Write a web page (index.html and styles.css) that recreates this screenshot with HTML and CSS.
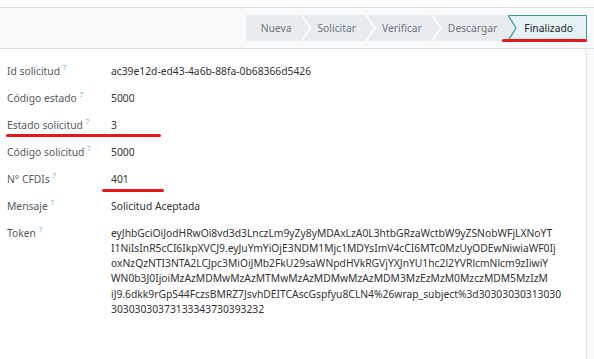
FILE: index.html
```html
<!DOCTYPE html>
<html lang="es">
  <head>
    <meta charset="UTF-8" />
    <meta name="viewport" content="width=device-width, initial-scale=1.0" />
    <title>Solicitud de descarga</title>
    <link rel="stylesheet" href="styles.css">
  </head>
  <body>
    <div class="top-gap"></div>
    <div class="control-panel">
      <div class="statusbar">
        <div class="status-btn first">Nueva</div>
        <div class="status-btn">Solicitar</div>
        <div class="status-btn">Verificar</div>
        <div class="status-btn">Descargar</div>
        <div class="status-btn current">
          <svg class="notch" width="10" height="26" viewBox="0 0 10 26">
            <polygon points="0,0 8,13 0,26" fill="#e9ecef" />
            <polyline points="0,0 8,13 0,26" fill="none" stroke="#3b9aa0" stroke-width="1.2" />
          </svg>
          Finalizado
          <span class="mark mark-status"></span>
        </div>
      </div>
    </div>

    <div class="content">
      <div class="sheet">
        <div class="form">
          <div class="field-row">
            <div class="label">Id solicitud<sup>?</sup></div>
            <div class="value">ac39e12d-ed43-4a6b-88fa-0b68366d5426</div>
          </div>
          <div class="field-row">
            <div class="label">Código estado<sup>?</sup></div>
            <div class="value">5000</div>
          </div>
          <div class="field-row">
            <div class="label">Estado solicitud<sup>?</sup></div>
            <div class="value">3</div>
            <span class="mark mark-estado"></span>
          </div>
          <div class="field-row">
            <div class="label">Código solicitud<sup>?</sup></div>
            <div class="value">5000</div>
          </div>
          <div class="field-row">
            <div class="label">N° CFDIs<sup>?</sup></div>
            <div class="value">401</div>
            <span class="mark mark-cfdis"></span>
          </div>
          <div class="field-row">
            <div class="label">Mensaje<sup>?</sup></div>
            <div class="value">Solicitud Aceptada</div>
          </div>
          <div class="field-row">
            <div class="label">Token<sup>?</sup></div>
            <div class="value token">eyJhbGciOiJodHRwOi8vd3d3LnczLm9yZy8yMDAxLzA0L3htbGRzaWctbW9yZSNobWFjLXNoYT<br>I1NiIsInR5cCI6IkpXVCJ9.eyJuYmYiOjE3NDM1Mjc1MDYsImV4cCI6MTc0MzUyODEwNiwiaWF0Ij<br>oxNzQzNTI3NTA2LCJpc3MiOiJMb2FkU29saWNpdHVkRGVjYXJnYU1hc2l2YVRlcmNlcm9zIiwiY<br>WN0b3J0IjoiMzAzMDMwMzAzMTMwMzAzMDMwMzAzMDM3MzEzMzM0MzczMDM5MzIzM<br>iJ9.6dkk9rGpS44FczsBMRZ7JsvhDEITCAscGspfyu8CLN4%26wrap_subject%3d30303030313030<br>30303030373133343730393232</div>
          </div>
        </div>
      </div>
    </div>
  </body>
</html>
```

FILE: styles.css
```css
body {
  margin: 0;
  background-color: #ffffff;
  font-family: "Noto Sans", "Open Sans", sans-serif;
  font-size: 10.3px;
  color: #333333;
}
.top-gap {
  height: 7px;
  background-color: #ffffff;
}
.control-panel {
  height: 40px;
  background-color: #f9fafb;
  border-top: 1px solid #dee2e6;
  border-bottom: 1px solid #dee2e6;
  display: flex;
  justify-content: flex-end;
  align-items: center;
  padding-right: 7px;
}
.statusbar {
  display: flex;
  background-color: #ffffff;
}
.status-btn {
  position: relative;
  height: 26px;
  display: flex;
  align-items: center;
  background-color: #e9ecef;
  color: #6c757d;
  padding: 0 18px 0 15px;
  margin-right: -7px;
  clip-path: polygon(0 0, calc(100% - 9px) 0, 100% 50%, calc(100% - 9px) 100%, 0 100%, 9px 50%);
}
.status-btn.first {
  clip-path: polygon(0 0, calc(100% - 9px) 0, 100% 50%, calc(100% - 9px) 100%, 0 100%);
}
.status-btn.current {
  height: 24px;
  margin-right: 0;
  clip-path: none;
  background-color: #e6f2f3;
  color: #212529;
  border: 1px solid #3b9aa0;
  border-left: none;
  padding: 0 13px 0 16px;
}
.notch {
  position: absolute;
  left: 0;
  top: -1px;
}
.mark {
  position: absolute;
  height: 3px;
  border-radius: 2px;
  background-color: #e3191c;
}
.mark-status {
  left: -6px;
  right: -1px;
  bottom: -2px;
}
.content {
  background-color: #f9fafb;
  padding-right: 7px;
}
.sheet {
  background-color: #ffffff;
  border-right: 1px solid #dee2e6;
  border-top-right-radius: 4px;
  min-height: 310px;
}
.form {
  padding-top: 8.5px;
}
.field-row {
  position: relative;
  display: grid;
  grid-template-columns: 111px 1fr;
  padding: 6px 0;
  line-height: 15px;
}
.label {
  padding-left: 7px;
  color: #555a60;
}
.label sup {
  font-size: 7px;
  color: #6fb2cf;
  margin-left: 3px;
  vertical-align: 5px;
  line-height: 0;
}
.value {
  color: #333333;
}
.token {
  line-height: 15.3px;
}
.mark-estado {
  left: 6px;
  width: 155px;
  bottom: 2px;
}
.mark-cfdis {
  left: 102px;
  width: 62px;
  bottom: 1px;
}
```
